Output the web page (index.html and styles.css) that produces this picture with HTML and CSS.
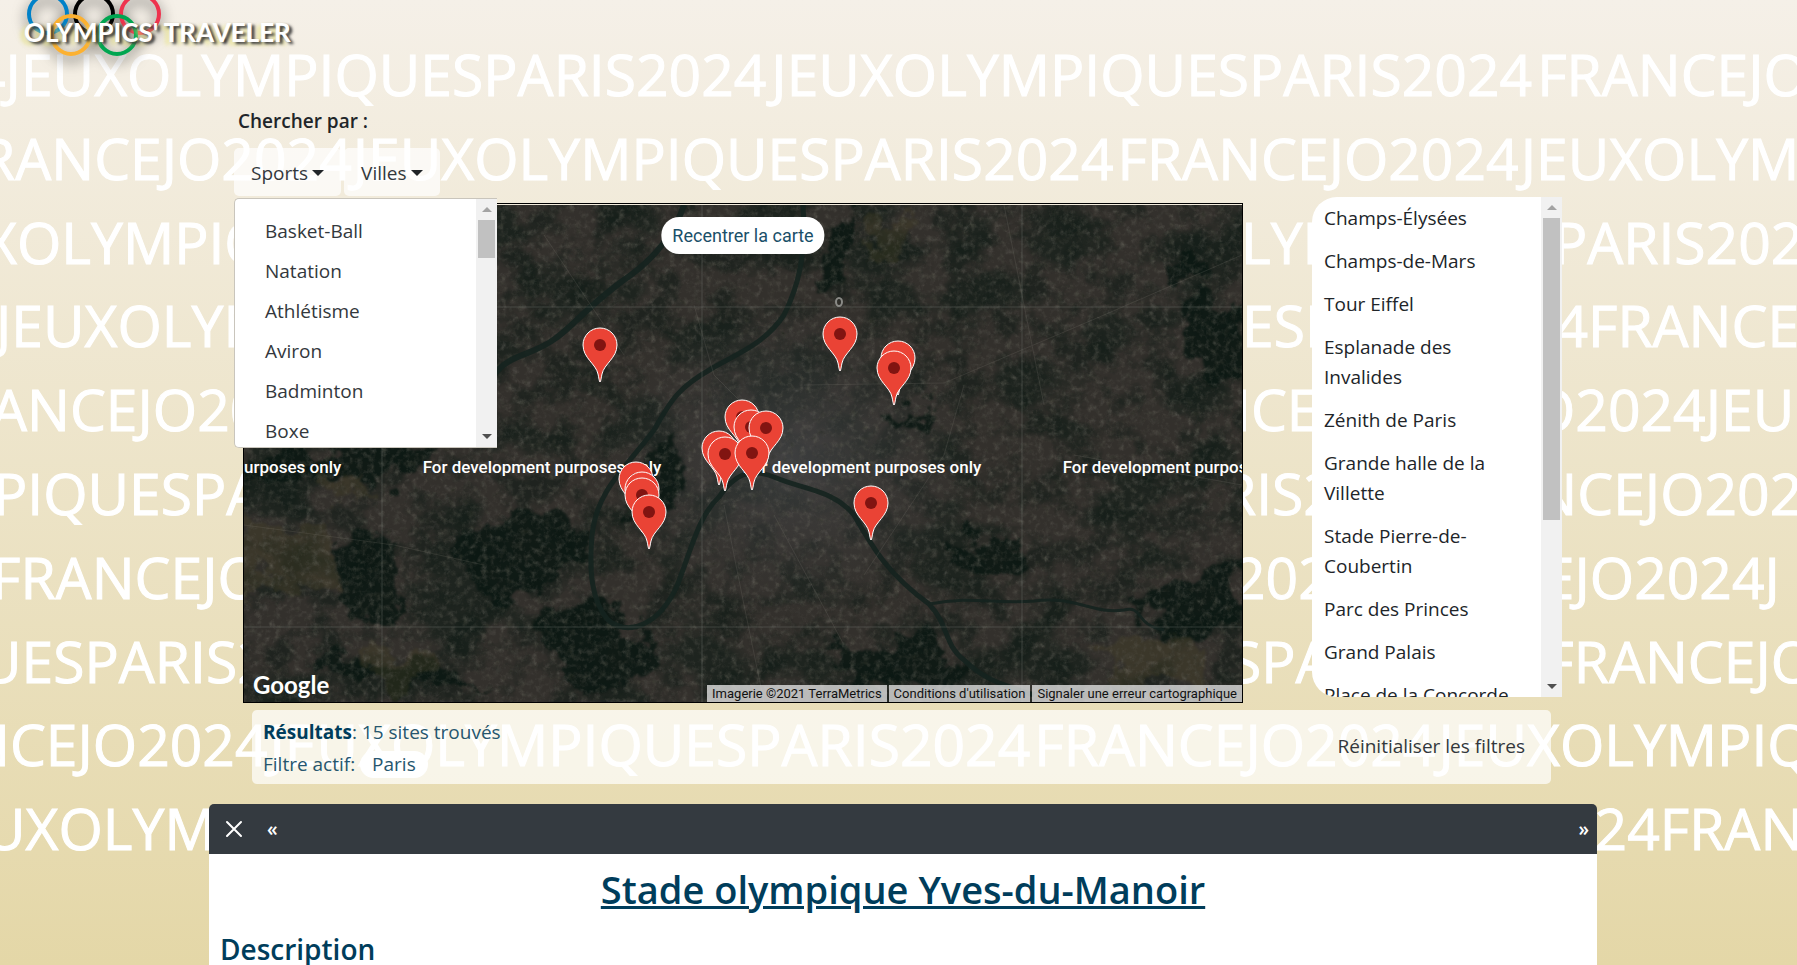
FILE: index.html
```html
<!DOCTYPE html>
<html lang="fr">
<head>
<meta charset="utf-8">
<title>Olympics' Traveler</title>
<link rel="stylesheet" href="styles.css">
</head>
<body>
<svg class="backdrop" aria-hidden="true">
  <text x="-27" y="96">4JEUXOLYMPIQUESPARIS2024<tspan dx="5">JEUXOLYMPIQUESPARIS2024</tspan><tspan dx="5">FRANCEJO</tspan></text>
  <text x="-20" y="180">RANCEJO2024<tspan dx="1">JEUXOLYMPIQUESPARIS2024</tspan><tspan dx="4">FRANCEJO2024</tspan><tspan dx="2">JEUXOLYM</tspan></text>
  <text x="-16" y="264">XOLYMPIQUES</text>
  <text x="1241" y="264">LYMPIQUESPARIS202</text>
  <text x="-4" y="347">JEUXOLYMPI</text>
  <text x="1242" y="347">ESPARIS2024FRANCE</text>
  <text x="-9" y="431">ANCEJO2024</text>
  <text x="1208" y="431">NCEJO</text>
  <text x="1531" y="431">O2024JEU</text>
  <text x="-7" y="515">PIQUESPARIS</text>
  <text x="1221" y="515">RIS2024FRANCEJO202</text>
  <text x="-9" y="599">FRANCEJO2024</text>
  <text x="1233" y="599">2024FRANCEJO2024J</text>
  <text x="-20" y="683">UESPARIS2024</text>
  <text x="1230" y="683">SPARIS2024FRANCEJO</text>
  <text x="-33" y="766">NCEJO2024<tspan dx="2">JEUXOLYMPIQUESPARIS2024</tspan><tspan dx="4">FRANCEJO2024</tspan><tspan dx="3">JEUXOLYMPIQ</tspan></text>
  <text x="-16" y="850">UXOLYMPI</text>
  <text x="1562" y="850">024FRAN</text>
</svg>

<header class="top">
  <a class="brand" href="#">
    <svg class="rings" width="150" height="70" viewBox="0 0 150 70" aria-hidden="true">
      <g fill="none" stroke-width="4">
        <circle cx="32" cy="14" r="19" stroke="#0081c8"/>
        <circle cx="78" cy="14" r="19" stroke="#000"/>
        <circle cx="124" cy="14" r="19" stroke="#ee334e"/>
        <circle cx="55" cy="35" r="19" stroke="#fcb131"/>
        <circle cx="101" cy="35" r="19" stroke="#00a651"/>
      </g>
    </svg>
    <span class="brand-name">OLYMPICS' TRAVELER</span>
  </a>
</header>

<main class="page">
  <section class="search">
    <h2 class="search-title">Chercher par :</h2>
    <div class="filters">
      <div class="dropdown">
        <button class="toggle" type="button" aria-expanded="true">Sports <span class="caret"></span></button>
        <div class="menu">
          <ul class="menu-items">
            <li><a href="#">Basket-Ball</a></li>
            <li><a href="#">Natation</a></li>
            <li><a href="#">Athlétisme</a></li>
            <li><a href="#">Aviron</a></li>
            <li><a href="#">Badminton</a></li>
            <li><a href="#">Boxe</a></li>
          </ul>
          <div class="scroll"><span class="arrow up"></span><span class="track"><span class="thumb short"></span></span><span class="arrow down"></span></div>
        </div>
      </div>
      <div class="dropdown">
        <button class="toggle" type="button">Villes <span class="caret"></span></button>
      </div>
    </div>
  </section>

  <section class="explorer">
    <div class="map">
      <svg class="terrain" viewBox="0 0 998 497" preserveAspectRatio="xMidYMid slice" role="img" aria-label="Carte de Paris">
        <defs>
          <filter id="grain" x="0" y="0" width="100%" height="100%" color-interpolation-filters="sRGB">
            <feTurbulence type="fractalNoise" baseFrequency="0.16" numOctaves="5" seed="7"/>
            <feColorMatrix values="0.5 0 0 0 0.08  0.46 0.04 0 0 0.07  0.45 0 0.04 0 0.05  0 2.4 0 0 -1"/>
          </filter>
          <filter id="shade" x="0" y="0" width="100%" height="100%" color-interpolation-filters="sRGB">
            <feTurbulence type="fractalNoise" baseFrequency="0.03" numOctaves="5" seed="33"/>
            <feColorMatrix values="0 0 0 0 0.07  0 0 0 0 0.11  0 0 0 0 0.09  0 0 4 0 -1.8"/>
          </filter>
          <filter id="patches" x="0" y="0" width="100%" height="100%" color-interpolation-filters="sRGB">
            <feTurbulence type="fractalNoise" baseFrequency="0.012 0.016" numOctaves="6" seed="21"/>
            <feColorMatrix values="0 0 0 0 0.04  0 0 0 0 0.1  0 0 0 0 0.075  6 0 0 0 -3"/>
          </filter>
          <filter id="rough" x="-20%" y="-20%" width="140%" height="140%" color-interpolation-filters="sRGB">
            <feTurbulence type="fractalNoise" baseFrequency="0.03" numOctaves="5" seed="4" result="n"/>
            <feDisplacementMap in="SourceGraphic" in2="n" scale="60" xChannelSelector="R" yChannelSelector="G"/>
            <feGaussianBlur stdDeviation="1"/>
          </filter>
          <radialGradient id="city"><stop offset="0" stop-color="#464648"/><stop offset="1" stop-color="#3a3938" stop-opacity="0"/></radialGradient>
          <g id="pin">
            <path d="M0 0C-1-1-1-4-2-8C-4-18-17-24-17-37A17 17 0 0 1 17-37C17-24 4-18 2-8C1-4 1-1 0 0Z" fill="#ea4335" stroke="#fff" stroke-width="1"/>
            <circle cy="-37" r="6" fill="#811411"/>
          </g>
        </defs>
        <rect width="998" height="497" fill="#33302c"/>
        <rect width="998" height="497" filter="url(#patches)" opacity=".5"/>
        <rect width="998" height="497" filter="url(#shade)" opacity=".6"/>
        <ellipse cx="545" cy="255" rx="190" ry="160" fill="url(#city)" opacity=".8"/>
        <g fill="#0a1712" opacity=".85" filter="url(#rough)">
          <path d="M0 240H120L200 250L150 280L90 270L40 290L0 280Z"/>
          <path d="M90 340L150 330L160 400L120 410L85 390Z"/>
          <path d="M230 320L330 310L340 340L280 400L240 400L205 350Z"/>
          <path d="M300 400L380 400L420 470L340 480L290 440Z"/>
          <path d="M70 450L190 455L240 490L70 470Z"/>
          <path d="M378 280L420 240L440 245L430 310L390 320Z"/>
          <path d="M705 335L760 330L790 365L750 375L710 365Z"/>
          <path d="M575 10L615 5L610 60L575 75Z"/>
          <path d="M920 55L970 50L965 80L925 85Z"/>
          <path d="M945 100L998 95V180L950 170Z"/>
          <path d="M890 390L998 350V420L920 440Z"/>
          <path d="M640 200L685 200L690 220L650 215Z"/>
          <path d="M590 440L680 430L720 480L610 490Z"/>
        </g>
        <g fill="#4a4428" opacity=".35" filter="url(#rough)">
          <path d="M0 310L90 320L85 380L20 370L0 400Z"/>
          <path d="M80 258L125 290L115 300L75 280Z"/>
          <path d="M120 440L190 450L180 480L130 480Z"/>
          <path d="M640 10L670 0L650 50L625 60Z"/>
          <path d="M860 440L940 430L960 470L880 480Z"/>
        </g>
        <rect width="998" height="497" filter="url(#grain)" opacity=".45"/>
        <g fill="none" stroke="#15231f" stroke-linejoin="round" opacity=".9">
          <path stroke-width="6" d="M440 0C430 30 410 55 377 77C340 105 330 120 312 133C290 150 270 148 254 165C225 195 220 220 205 240"/>
          <path stroke-width="5" d="M559 0C562 50 555 80 540 110C520 140 490 150 467 164C430 185 425 200 410 225C380 265 353 285 348 330C345 365 347 395 364 415C385 432 415 420 433 381C447 345 455 310 475 292C490 270 505 262 530 272C560 285 590 285 610 310C630 345 645 370 685 399C705 420 700 440 720 455C740 475 760 480 790 490"/>
          <path stroke-width="3" d="M685 399C730 390 750 400 790 396C830 390 850 410 880 405C900 400 890 420 920 425"/>
        </g>
        <g fill="none" stroke="#817d75" opacity=".2">
          <path d="M560 180L700 178L860 110L998 50M480 300L500 400L520 497M0 320L150 340L240 360M620 370L700 250L720 180"/>
          <path d="M530 310L600 440M450 100L470 170L530 230M300 30L380 150M760 0L800 200M830 250L998 280"/>
        </g>
        <path d="M138 0V497M458 0V497M778 0V497M0 102H998M0 422H998" stroke="#788078" stroke-opacity=".35" fill="none"/>
        <ellipse cx="595" cy="97" rx="3" ry="4" fill="none" stroke="#8a8a86" stroke-width="2"/>
        <g class="watermark">
          <text x="-22" y="268">For development purposes only</text>
          <text x="298" y="268">For development purposes only</text>
          <text x="618" y="268">For development purposes only</text>
          <text x="938" y="268">For development purposes only</text>
        </g>
        <g>
          <use href="#pin" x="356" y="177"/><use href="#pin" x="596" y="166"/>
          <use href="#pin" x="654" y="190"/><use href="#pin" x="650" y="200"/>
          <use href="#pin" x="498" y="249"/><use href="#pin" x="507" y="259"/>
          <use href="#pin" x="522" y="260"/><use href="#pin" x="475" y="280"/>
          <use href="#pin" x="481" y="286"/><use href="#pin" x="508" y="285"/>
          <use href="#pin" x="392" y="311"/><use href="#pin" x="398" y="321"/>
          <use href="#pin" x="398" y="327"/><use href="#pin" x="405" y="344"/>
          <use href="#pin" x="627" y="335"/>
        </g>
      </svg>
      <button class="recenter" type="button">Recentrer la carte</button>
      <span class="google">Google</span>
      <div class="credits">
        <span>Imagerie ©2021 TerraMetrics</span>
        <a href="#">Conditions d'utilisation</a>
        <a href="#">Signaler une erreur cartographique</a>
      </div>
    </div>

    <div class="sites">
      <ul class="site-list">
        <li>Champs-Élysées</li>
        <li>Champs-de-Mars</li>
        <li>Tour Eiffel</li>
        <li>Esplanade des Invalides</li>
        <li>Zénith de Paris</li>
        <li>Grande halle de la Villette</li>
        <li>Stade Pierre-de-Coubertin</li>
        <li>Parc des Princes</li>
        <li>Grand Palais</li>
        <li>Place de la Concorde</li>
      </ul>
      <div class="scroll"><span class="arrow up"></span><span class="track"><span class="thumb long"></span></span><span class="arrow down"></span></div>
    </div>
  </section>

  <section class="results">
    <div class="summary">
      <p><strong>Résultats</strong>: 15 sites trouvés</p>
      <p>Filtre actif: <span class="pill">Paris</span></p>
    </div>
    <button class="reset" type="button">Réinitialiser les filtres</button>
  </section>

  <article class="detail">
    <div class="detail-bar">
      <button type="button" aria-label="Fermer"><svg width="18" height="18" viewBox="0 0 18 18" aria-hidden="true"><path d="M2 2L16 16M16 2L2 16" stroke="#fff" stroke-width="2" stroke-linecap="round"/></svg></button>
      <button class="step" type="button">«</button>
      <button class="step next" type="button">»</button>
    </div>
    <div class="detail-body">
      <h1>Stade olympique Yves-du-Manoir</h1>
      <h2>Description</h2>
    </div>
  </article>
</main>
</body>
</html>
```
FILE: styles.css
```css
* { box-sizing: border-box; }
html { height: 100%; overflow: hidden; }
body {
  margin: 0;
  height: 100%;
  overflow: hidden;
  position: relative;
  background: linear-gradient(to bottom, #f5f0e8, #e4d7a7);
  color: #212529;
  font: 19px/30px "Open Sans", "Noto Sans", sans-serif;
}
h1, h2, p, ul { margin: 0; padding: 0; }
ul { list-style: none; }
a { color: inherit; text-decoration: none; }
button { font: inherit; color: inherit; border: 0; background: none; padding: 0; cursor: pointer; }

.backdrop { position: absolute; inset: 0; width: 100%; height: 100%; }
.backdrop text { font-size: 57px; fill: #fff; stroke: #fff; stroke-width: 1px; }

.top { position: relative; height: 106px; padding: 0 16px; }
.brand { display: block; position: relative; width: max-content; }
.rings { display: block; overflow: visible; filter: drop-shadow(0 5px 7px rgba(0, 0, 0, .7)); }
.brand-name {
  position: absolute;
  left: 8px;
  top: 16px;
  white-space: nowrap;
  color: #fff;
  font: 700 26px/32px Lato, sans-serif;
  text-shadow: 3px 2px 3px #333, -4px 3px 4px rgba(230, 225, 120, .7);
}

.page { position: relative; padding: 0 200px 0 209px; }
.search { padding-left: 25px; }
.search-title { padding-left: 4px; font-size: 19px; line-height: 30px; font-weight: 600; }
.filters { display: flex; gap: 3px; margin-top: 12px; }
.dropdown { position: relative; }
.toggle {
  display: flex;
  align-items: center;
  gap: 4px;
  height: 48px;
  padding: 2px 17px 0;
  border-radius: 5px;
  background: rgba(255, 255, 255, .7);
  color: #33383c;
}
.caret { border: 6px solid transparent; border-top-color: #212529; border-bottom: 0; }
.menu {
  position: absolute;
  z-index: 2;
  top: 50px;
  left: 0;
  display: flex;
  width: 263px;
  height: 250px;
  overflow: hidden;
  border: 1px solid #c9c5bc;
  border-right: 0;
  border-radius: 5px 0 0 5px;
  background: #fff;
}
.menu-items { flex: 1; padding-top: 12px; }
.menu-items a { display: block; padding: 5px 30px; color: #33383c; }

.scroll { display: flex; flex-direction: column; width: 21px; background: #f1f1f1; }
.arrow { display: grid; place-items: center; height: 21px; }
.arrow::before { content: ""; border: 5px solid transparent; }
.arrow.up::before { border-top: 0; border-bottom-color: #a3a3a3; }
.arrow.down::before { border-bottom: 0; border-top-color: #505050; }
.track { flex: 1; padding: 0 2px; }
.thumb { display: block; background: #c1c1c1; }
.short { height: 38px; }
.long { height: 302px; }

.explorer { display: flex; align-items: flex-start; justify-content: space-between; gap: 69px; padding: 1px 35px 0 34px; }
.map {
  position: relative;
  flex: 1;
  height: 500px;
  margin-top: 6px;
  padding-top: 1px;
  overflow: hidden;
  border: 1px solid #000;
  background: #f3ecdd;
}
.terrain { display: block; width: 100%; height: 100%; }
.watermark { font: 500 17px Roboto, sans-serif; fill: #fff; text-anchor: middle; }
.recenter {
  position: absolute;
  top: 13px;
  left: 50%;
  transform: translateX(-50%);
  height: 37px;
  padding: 0 11px;
  border-radius: 18px;
  background: #fff;
  color: #1a4f69;
  font: 18px/37px Roboto, sans-serif;
  white-space: nowrap;
}
.google { position: absolute; left: 9px; bottom: 1px; color: #fff; font: 700 24px/32px Lato, sans-serif; }
.credits { position: absolute; right: 0; bottom: 0; display: flex; gap: 2px; font: 13px/17px Roboto, sans-serif; color: #111; }
.credits > * { padding: 0 5px; background: rgba(235, 235, 235, .75); }

.sites { display: flex; width: 250px; height: 500px; overflow: hidden; border-radius: 25px 0 0 25px; background: #fff; }
.site-list { flex: 1; padding: 6px 12px 0; }
.site-list li { margin-bottom: 13px; }

.results {
  display: flex;
  align-items: center;
  justify-content: space-between;
  margin: 7px 46px 0 43px;
  padding: 6px 26px 4px 11px;
  border-radius: 5px;
  background: rgba(255, 255, 255, .7);
  color: #26566e;
  line-height: 32px;
}
.results strong { color: #003d5b; }
.pill { display: inline-block; padding: 0 12px; border-radius: 14px; background: #fff; line-height: 27px; }
.reset { margin-bottom: 4px; color: #33383c; }

.detail { margin-top: 20px; }
.detail-bar { display: flex; align-items: center; gap: 24px; height: 50px; padding: 0 8px 0 16px; border-radius: 5px 5px 0 0; background: #343a40; color: #fff; }
.detail-bar svg { display: block; }
.step { font-weight: 600; }
.next { margin-left: auto; }
.detail-body { padding: 6px 11px 40px; background: #fff; color: #003d5b; }
.detail-body h1 { text-align: center; text-decoration: underline; font-size: 38px; line-height: 58px; font-weight: 600; }
.detail-body h2 { margin-top: 11px; font-size: 28px; line-height: 40px; font-weight: 600; }
```
